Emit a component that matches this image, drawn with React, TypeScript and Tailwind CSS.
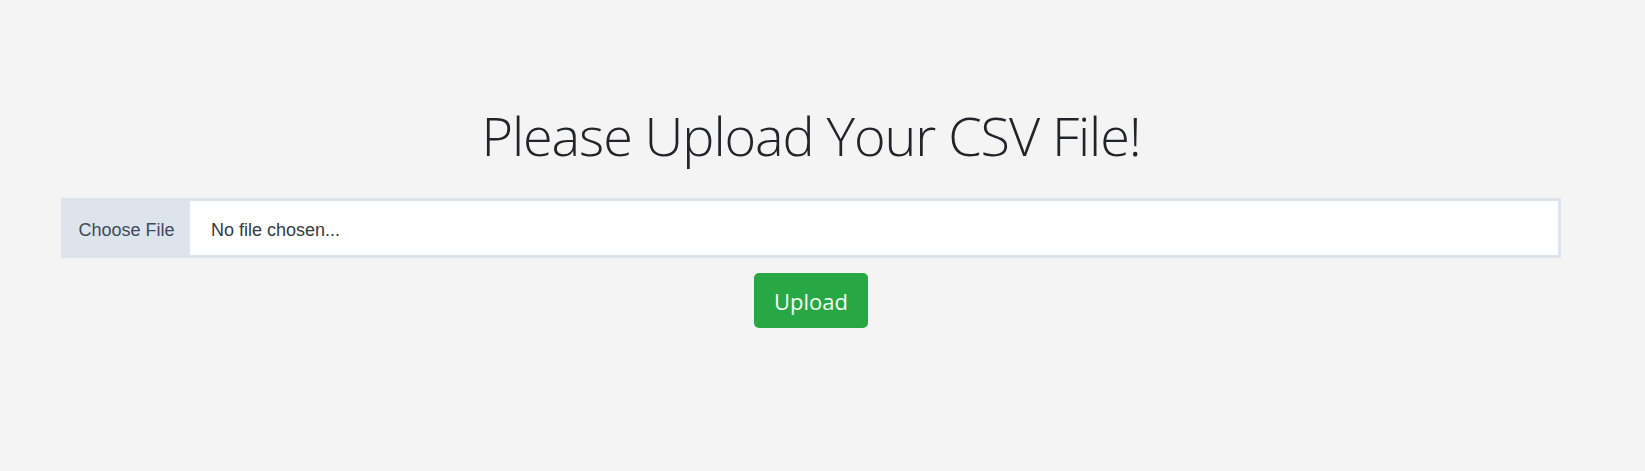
import { useState } from 'react';

export default function App() {
  const [fileName, setFileName] = useState('');

  return (
    <div className="min-h-screen w-full bg-[#f4f4f4]">
      <div className="w-[1622px] pt-[103px] flex flex-col items-center">
        <h1 className="text-[54px] leading-[1.2] font-light text-[#212529] font-['Open_Sans',sans-serif] tracking-[-1.1px]">
          Please Upload Your CSV File!
        </h1>

        <label className="mt-[30px] w-[1500px] h-[60px] flex border-[3px] border-[#dde4ec] bg-white cursor-pointer font-['Liberation_Sans',Arial,sans-serif] text-[18px] text-[#3f4a5a]">
          <span className="w-[126px] shrink-0 bg-[#dde4ec] flex items-center justify-center pr-[1px] pt-[5px]">
            Choose File
          </span>
          <span className="flex items-center pl-[21px] pt-[5px] text-[#343a40]">
            {fileName || 'No file chosen...'}
          </span>
          <input
            type="file"
            accept=".csv"
            className="hidden"
            onChange={e => setFileName(e.target.files?.[0]?.name || '')}
          />
        </label>

        <button className="mt-[15px] w-[114px] h-[55px] rounded-[5px] bg-[#28a745] text-[#f4fff4] text-[22px] font-['Open_Sans',sans-serif] pt-[2px]">
          Upload
        </button>
      </div>
    </div>
  );
}
